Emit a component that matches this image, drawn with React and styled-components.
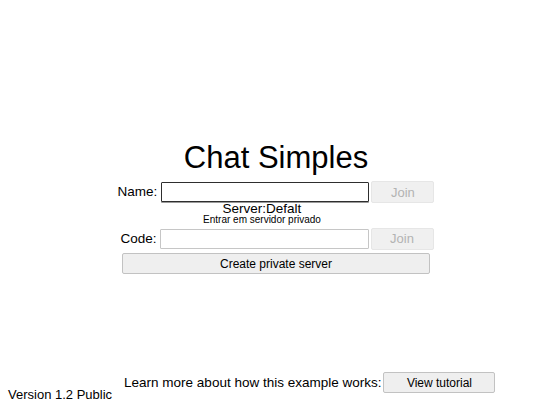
import React from "react";
import styled, { createGlobalStyle } from "styled-components";

const GlobalStyle = createGlobalStyle`
  html, body {
    margin: 0;
    padding: 0;
    background: #fff;
  }
  body {
    font-family: "Liberation Sans", Arial, sans-serif;
    color: #000;
  }
`;

const Page = styled.div`
  min-height: 100vh;
  display: flex;
  flex-direction: column;
  box-sizing: border-box;
`;

const Main = styled.div`
  display: flex;
  flex-direction: column;
  align-items: center;
  padding: 140px 0 0 12px;
`;

const Title = styled.h1`
  margin: 0 0 5px;
  font-size: 31px;
  font-weight: 400;
  line-height: 36px;
`;

const Row = styled.div`
  display: flex;
  align-items: center;
  height: ${(p) => p.h}px;
  margin-left: ${(p) => p.shift || 0}px;
`;

const Label = styled.span`
  font-size: 13.5px;
  line-height: 16px;
  margin-right: ${(p) => p.gap}px;
`;

const TextInput = styled.input`
  box-sizing: border-box;
  width: ${(p) => p.w}px;
  height: 20px;
  margin: 0 2px 0 0;
  padding: 1px 2px;
  font-family: inherit;
  font-size: 13px;
  background: #fff;
  outline: none;
  border: 1px solid ${(p) => (p.focused ? "#2e2e2e" : "#c6c6c6")};
  border-radius: 1px;
  box-shadow: ${(p) => (p.focused ? "0 1px 0 #9a9a9a" : "none")};
`;

const JoinButton = styled.button`
  box-sizing: border-box;
  width: 63px;
  height: 22px;
  margin: 0;
  padding: 0;
  font-family: inherit;
  font-size: 13px;
  color: #b3b3b3;
  background: #f0f0f0;
  border: 1px solid #e6e6e6;
  border-radius: 2px;
`;

// server name + hint sit tight under the name row, a bit left of centre
const ServerInfo = styled.div`
  display: flex;
  flex-direction: column;
  align-items: center;
  margin-right: 28px;
`;

const ServerName = styled.div`
  font-size: 13.5px;
  line-height: 12px;
`;

const PrivateHint = styled.div`
  font-size: 10px;
  line-height: 10px;
  margin-bottom: 3px;
`;

const WideButton = styled.button`
  box-sizing: border-box;
  width: 308px;
  height: 21px;
  margin: 4px 0 0;
  padding: 0;
  font-family: inherit;
  font-size: 12px;
  color: #000;
  background: #efefef;
  border: 1px solid #c2c2c2;
  border-radius: 2px;
`;

const Footer = styled.div`
  margin-top: auto;
  display: flex;
  align-items: flex-end;
  padding: 0 0 3px 8px;
`;

const Version = styled.span`
  font-size: 13px;
  line-height: 15px;
`;

const Tutorial = styled.div`
  display: flex;
  align-items: center;
  margin: 0 0 9px 12px;
`;

const TutorialText = styled.span`
  font-size: 13.5px;
  line-height: 16px;
  margin-right: 2px;
`;

const TutorialButton = styled.button`
  box-sizing: border-box;
  width: 112px;
  height: 21px;
  margin: 0;
  padding: 0;
  font-family: inherit;
  font-size: 12px;
  color: #000;
  background: #efefef;
  border: 1px solid #c2c2c2;
  border-radius: 2px;
`;

export default function App() {
  return (
    <Page>
      <GlobalStyle />
      <Main>
        <Title>Chat Simples</Title>
        <Row h={22}>
          <Label gap={4}>Name:</Label>
          <TextInput w={208} focused />
          <JoinButton disabled>Join</JoinButton>
        </Row>
        <ServerInfo>
          <ServerName>Server:Defalt</ServerName>
          <PrivateHint>Entrar em servidor privado</PrivateHint>
        </ServerInfo>
        <Row h={21} shift={2}>
          <Label gap={3}>Code:</Label>
          <TextInput w={209} />
          <JoinButton disabled>Join</JoinButton>
        </Row>
        <WideButton>Create private server</WideButton>
      </Main>
      <Footer>
        <Version>Version 1.2 Public</Version>
        <Tutorial>
          <TutorialText>Learn more about how this example works:</TutorialText>
          <TutorialButton>View tutorial</TutorialButton>
        </Tutorial>
      </Footer>
    </Page>
  );
}
